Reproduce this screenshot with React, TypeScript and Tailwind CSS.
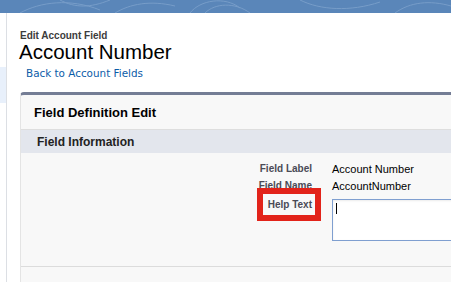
import React from 'react';

function Banner() {
  return (
    <div className="relative h-[13px] w-full overflow-hidden bg-[#5a86b9]">
      <svg className="absolute inset-0" width="451" height="13" viewBox="0 0 451 13" fill="none">
        <g stroke="#8fb0d6" strokeWidth="1" opacity="0.55">
          <path d="M20 13 C40 2, 70 -2, 100 10" />
          <path d="M115 13 C130 4, 150 0, 175 6" />
          <path d="M190 13 C200 0, 225 -4, 240 8" />
          <path d="M205 13 C215 3, 235 2, 250 13" />
          <path d="M300 0 C320 10, 350 12, 380 2" />
          <path d="M395 13 C410 2, 430 0, 451 6" />
          <path d="M60 0 C75 8, 90 8, 110 0" />
        </g>
      </svg>
    </div>
  );
}

export default function App() {
  return (
    <div className="w-[451px] h-[282px] overflow-hidden bg-white font-['Liberation_Sans',Arial,sans-serif]">
      <Banner />
      <div className="flex h-[269px]">
        <div className="w-[7px] shrink-0 border-r border-[#dcdfe4] pt-[54px]">
          <div className="h-[36px] bg-[#e8f0fb]" />
        </div>
        <div className="flex-1 min-w-0 pl-[13px] pt-[17px]">
          <div className="text-[10px] leading-[12px] font-bold text-[#3c3c3c]">Edit Account Field</div>
          <div className="text-[20.5px] leading-[20px] text-black -ml-[1px]">Account Number</div>
          <div className="mt-[5px] ml-[6px] text-[10.4px] leading-[12px] text-[#0b5ca8] font-['DejaVu_Sans',Verdana,sans-serif]">
            Back to Account Fields
          </div>
          <div className="mt-[13px] w-[460px] rounded-tl-[4px] border-t-[3px] border-l border-t-[#747d95] border-l-[#e4e4e4] bg-[#f8f8f8]">
            <div className="h-[35px] border-b border-[#dedede] pl-[13px] pt-[11px] text-[13px] leading-[14px] font-bold text-black">
              Field Definition Edit
            </div>
            <div className="h-[23px] bg-[#e3e6ed] pl-[16px] pt-[5px] text-[12px] leading-[14px] font-bold text-[#222]">
              Field Information
            </div>
            <div className="border-b border-[#dcdcdc] pt-[8px] pb-[25px]">
              <div className="flex h-[17px] items-start pt-[0px] leading-[16px]">
                <div className="w-[291px] shrink-0 text-right text-[10px] font-bold text-[#4a4a56]">Field Label</div>
                <div className="pl-[20px] text-[11px] text-black">Account Number</div>
              </div>
              <div className="flex h-[16px] items-start leading-[16px]">
                <div className="w-[291px] shrink-0 text-right text-[10px] font-bold text-[#4a4a56]">Field Name</div>
                <div className="pl-[20px] text-[11px] text-black">AccountNumber</div>
              </div>
              <div className="mt-[5px] flex">
                <div className="relative w-[291px] h-[16px] shrink-0 text-right text-[10px] leading-[12px] font-bold text-[#4a4a56]">
                  Help Text
                  <span className="absolute right-[-9px] top-[-11px] w-[64px] h-[33px] border-[6px] border-[#e2231a]" />
                </div>
                <div className="ml-[20px] relative h-[42px] w-[200px] shrink-0 border border-[#7f9fd0] bg-white shadow-[inset_0_1px_2px_rgba(0,0,0,0.08)]">
                  <span className="absolute left-[3px] top-[3px] h-[11px] w-[1px] bg-black" />
                </div>
              </div>
            </div>
            <div className="h-[20px]" />
          </div>
        </div>
      </div>
    </div>
  );
}
